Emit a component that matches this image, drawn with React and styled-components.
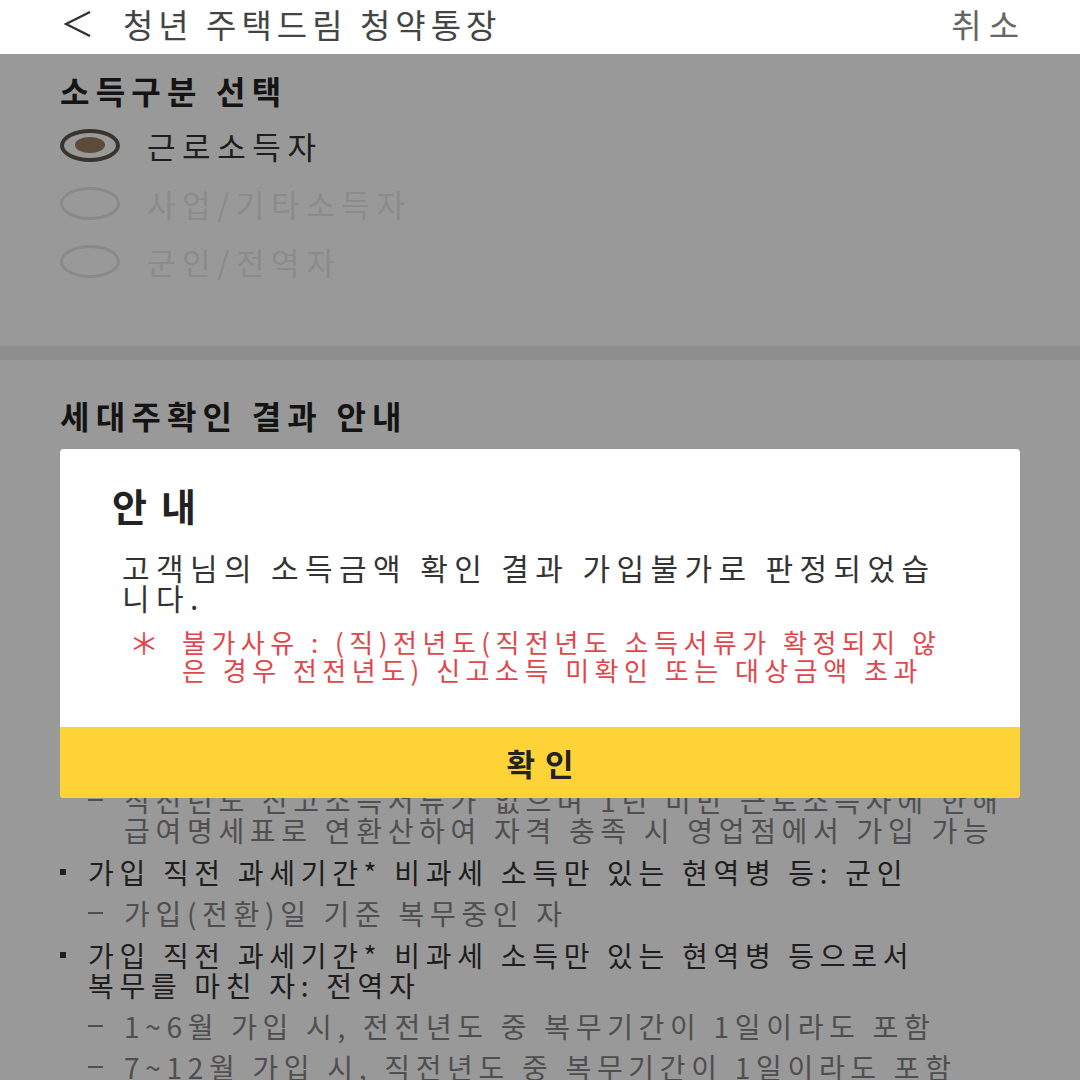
import React from 'react'
import styled, { createGlobalStyle } from 'styled-components'

const GlobalStyle = createGlobalStyle`
  * { box-sizing: border-box; }
  html, body {
    margin: 0;
    padding: 0;
    height: 1080px;
    overflow: hidden;
    background: #fff;
  }
  body {
    font-family: "Noto Sans CJK KR", "Noto Sans", sans-serif;
    color: #333;
  }
`

const Screen = styled.div`
  width: 1080px;
  height: 1080px;
  display: flex;
  flex-direction: column;
  overflow: hidden;
`

const Header = styled.header`
  height: 54px;
  flex-shrink: 0;
  display: flex;
  align-items: center;
  padding: 0 54px 6px 64px;
  background: #fff;
`

const BackButton = styled.button`
  border: none;
  background: none;
  padding: 0;
  margin-right: 31px;
  display: flex;
  cursor: pointer;
`

const Title = styled.h1`
  flex: 1;
  margin: 0;
  font-size: 33px;
  line-height: 40px;
  font-weight: 400;
  letter-spacing: 5px;
  color: #444;
`

const Cancel = styled.button`
  border: none;
  background: none;
  padding: 0;
  font-family: inherit;
  font-size: 33px;
  line-height: 40px;
  letter-spacing: 7px;
  color: #666;
`

const Content = styled.main`
  flex: 1;
  position: relative;
  overflow: hidden;
`

const Section = styled.section`
  background: #fff;
  padding: ${p => p.$top}px 60px ${p => p.$bottom}px;
`

const SectionTitle = styled.h2`
  margin: 0;
  font-size: 32px;
  line-height: 36px;
  font-weight: 700;
  letter-spacing: 6.2px;
  color: #222;
`

const RadioList = styled.div`
  display: flex;
  flex-direction: column;
  margin-top: 8px;
`

const RadioRow = styled.label`
  height: 58px;
  display: flex;
  align-items: center;
  gap: 27px;
  color: ${p => (p.$disabled ? '#e8e8e8' : '#333')};
`

const RadioMark = styled.span`
  width: 60px;
  height: 33px;
  border-radius: 50%;
  border: ${p => (p.$checked ? '4px solid #60584c' : '3px solid #e4e4e4')};
  display: flex;
  align-items: center;
  justify-content: center;

  &::after {
    content: '';
    display: ${p => (p.$checked ? 'block' : 'none')};
    width: 30px;
    height: 16px;
    border-radius: 50%;
    background: #9a7d5e;
  }
`

const RadioLabel = styled.span`
  font-size: 31px;
  letter-spacing: 6.6px;
`

const Divider = styled.div`
  height: 14px;
  background: #ededed;
`

const NoticeList = styled.ul`
  list-style: none;
  margin: 22px 0 0;
  padding: 0;
`

const NoticeItem = styled.li`
  display: flex;
  font-size: 28px;
  line-height: 30px;
  letter-spacing: 5.7px;
  word-break: keep-all;
  color: ${p => (p.$sub ? '#848484' : '#333')};
  margin-top: ${p => (p.$sub ? 11 : 12)}px;
  padding-left: ${p => (p.$sub ? 28 : 0)}px;

  &:first-child {
    margin-top: 0;
  }
`

const Marker = styled.span`
  flex-shrink: 0;
  width: ${p => (p.$sub ? 36 : 28)}px;
  height: 30px;
  display: flex;
  align-items: center;

  &::before {
    content: '';
    display: block;
    width: ${p => (p.$sub ? 15 : 6)}px;
    height: ${p => (p.$sub ? 2 : 6)}px;
    background: currentColor;
  }
`

const Backdrop = styled.div`
  position: absolute;
  inset: 0;
  background: rgba(0, 0, 0, 0.4);
  padding: 395px 60px 0;
`

const Dialog = styled.div`
  background: #fff;
  border-radius: 4px;
  overflow: hidden;
`

const DialogBody = styled.div`
  padding: 34px 70px 43px 52px;
`

const DialogTitle = styled.h3`
  margin: 0;
  font-size: 38px;
  line-height: 44px;
  font-weight: 700;
  letter-spacing: 14px;
  color: #222;
`

const Message = styled.p`
  margin: 25px 0 0 10px;
  font-size: 30px;
  line-height: 30px;
  letter-spacing: 6.4px;
  color: #333;
`

const Note = styled.div`
  display: flex;
  margin: 16px 0 0 17px;
  color: #e0474c;
`

const Asterisk = styled.span`
  flex-shrink: 0;
  width: 53px;
  font-size: 30px;
  line-height: 28px;
`

const NoteText = styled.p`
  margin: 0;
  font-size: 26px;
  line-height: 28px;
  letter-spacing: 5.5px;
`

const ConfirmButton = styled.button`
  display: block;
  width: 100%;
  height: 71px;
  border: none;
  padding: 0 0 0 10px;
  background: #fed338;
  font-family: inherit;
  font-size: 31px;
  font-weight: 700;
  letter-spacing: 10px;
  color: #222;
  cursor: pointer;
`

const incomeTypes = [
  { label: '근로소득자', checked: true },
  { label: '사업/기타소득자', disabled: true },
  { label: '군인/전역자', disabled: true },
]

const notices = [
  { text: '가입 직전 과세기간* 근로소득이 있는 자: 근로소득자' },
  { sub: true, text: '연 소득 5천만원 이하' },
  { sub: true, text: '근로소득 원천징수영수증 등으로 확인' },
  { text: '가입 직전 과세기간* 사업소득이 있는 자: 사업소득자' },
  { sub: true, text: '연 소득 5천만원 이하' },
  { sub: true, text: '종합소득세 신고 기준으로 확인' },
  { text: '신규 취업자 등: 근로소득자' },
  { sub: true, text: '1년 미만 근로소득자 포함' },
  { sub: true, text: '직전년도 신고소득서류가 없으며 1년 미만 근로소득자에 한해 급여명세표로 연환산하여 자격 충족 시 영업점에서 가입 가능' },
  { text: '가입 직전 과세기간* 비과세 소득만 있는 현역병 등: 군인' },
  { sub: true, text: '가입(전환)일 기준 복무중인 자' },
  { text: '가입 직전 과세기간* 비과세 소득만 있는 현역병 등으로서 복무를 마친 자: 전역자' },
  { sub: true, text: '1~6월 가입 시, 전전년도 중 복무기간이 1일이라도 포함' },
  { sub: true, text: '7~12월 가입 시, 직전년도 중 복무기간이 1일이라도 포함' },
]

const BackIcon = () => (
  <svg width="28" height="26" viewBox="0 0 28 26" fill="none">
    <polyline points="26,1 2,13 26,25" stroke="#333" strokeWidth="2.4" strokeLinejoin="miter" />
  </svg>
)

export default function App() {
  return (
    <Screen>
      <GlobalStyle />
      <Header>
        <BackButton aria-label="뒤로">
          <BackIcon />
        </BackButton>
        <Title>청년 주택드림 청약통장</Title>
        <Cancel>취소</Cancel>
      </Header>

      <Content>
        <Section $top={18} $bottom={56}>
          <SectionTitle>소득구분 선택</SectionTitle>
          <RadioList>
            {incomeTypes.map(t => (
              <RadioRow key={t.label} $disabled={t.disabled}>
                <RadioMark $checked={t.checked} />
                <RadioLabel>{t.label}</RadioLabel>
              </RadioRow>
            ))}
          </RadioList>
        </Section>

        <Divider />

        <Section $top={37} $bottom={40}>
          <SectionTitle>세대주확인 결과 안내</SectionTitle>
          <NoticeList>
            {notices.map((n, i) => (
              <NoticeItem key={i} $sub={n.sub}>
                <Marker $sub={n.sub} />
                <span>{n.text}</span>
              </NoticeItem>
            ))}
          </NoticeList>
        </Section>

        <Backdrop>
          <Dialog role="dialog">
            <DialogBody>
              <DialogTitle>안내</DialogTitle>
              <Message>고객님의 소득금액 확인 결과 가입불가로 판정되었습니다.</Message>
              <Note>
                <Asterisk>＊</Asterisk>
                <NoteText>불가사유 : (직)전년도(직전년도 소득서류가 확정되지 않은 경우 전전년도) 신고소득 미확인 또는 대상금액 초과</NoteText>
              </Note>
            </DialogBody>
            <ConfirmButton>확인</ConfirmButton>
          </Dialog>
        </Backdrop>
      </Content>
    </Screen>
  )
}
